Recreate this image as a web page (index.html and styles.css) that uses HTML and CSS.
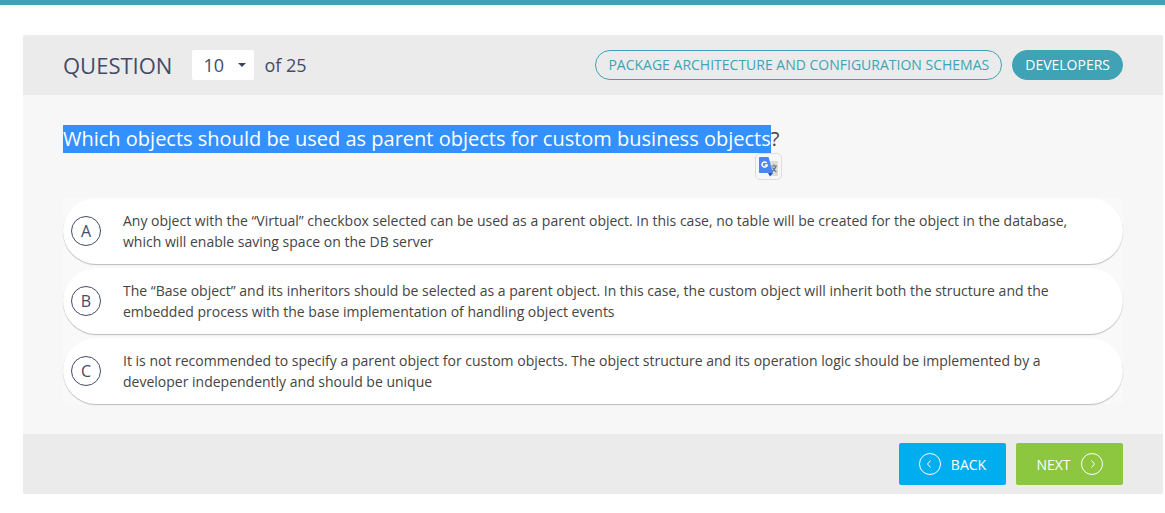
FILE: index.html
```html
<!DOCTYPE html>
<html lang="en">
<head>
<meta charset="utf-8">
<title>Question 10 of 25</title>
<link rel="stylesheet" href="styles.css">
</head>
<body>
<main class="quiz">
  <header class="quiz-header">
    <h1 class="quiz-title">QUESTION</h1>
    <div class="picker">
      <select class="picker-select" aria-label="Question number"><option>10</option></select>
      <svg class="picker-caret" viewBox="0 0 8 4" aria-hidden="true"><path d="M0 0h8L4 4z"/></svg>
    </div>
    <span class="total">of 25</span>
    <div class="tags">
      <a class="tag" href="#">PACKAGE ARCHITECTURE AND CONFIGURATION SCHEMAS</a>
      <a class="tag tag-filled" href="#">DEVELOPERS</a>
    </div>
  </header>
  <form class="quiz-body">
    <h2 class="question"><span class="selected">Which objects should be used as parent objects for custom business objects<button class="translate" type="button" aria-label="Translate">
      <svg viewBox="0 0 20 20" aria-hidden="true">
        <path fill="#dcdcdc" d="M9 4h9.500q.5 0 .5.500v14q0 .5-.5.500H12z"/>
        <path fill="none" stroke="#607d80" stroke-width="1.200" d="M12.500 9H18M15 7.500V9M17 9q-1 4-5 6M13.500 10.500q1.500 3 4 4.500"/>
        <path fill="#4a86ee" d="M.8 0H9.500L14 16H.8q-.8 0-.8-.8V.8Q0 0 .8 0z"/>
        <path fill="#2a4fc0" d="M9 16h5l-3 3.500z"/>
        <path fill="none" stroke="#fff" stroke-width="1.500" d="M7.700 5.900A2.600 2.600 0 1 0 8.200 8H5.800"/>
      </svg>
    </button></span>?</h2>
    <div class="answers">
      <div class="answer"><label class="card"><input class="choice" type="radio" name="answer"><span class="letter">A</span><span class="text">Any object with the “Virtual” checkbox selected can be used as a parent object. In this case, no table will be created for the object in the database, which will enable saving space on the DB server</span></label></div>
      <div class="answer"><label class="card"><input class="choice" type="radio" name="answer"><span class="letter">B</span><span class="text">The “Base object” and its inheritors should be selected as a parent object. In this case, the custom object will inherit both the structure and the embedded process with the base implementation of handling object events</span></label></div>
      <div class="answer"><label class="card"><input class="choice" type="radio" name="answer"><span class="letter">C</span><span class="text">It is not recommended to specify a parent object for custom objects. The object structure and its operation logic should be implemented by a developer independently and should be unique</span></label></div>
    </div>
  </form>
  <footer class="quiz-footer">
    <button class="nav back" type="button"><svg class="nav-icon" viewBox="0 0 22 22" aria-hidden="true"><circle cx="11" cy="11" r="10.500"/><path d="M11.500 7.500 8.500 11l3 3.500"/></svg>BACK</button>
    <button class="nav next" type="button">NEXT<svg class="nav-icon" viewBox="0 0 22 22" aria-hidden="true"><circle cx="11" cy="11" r="10.500"/><path d="m10.500 7.500 3 3.500-3 3.500"/></svg></button>
  </footer>
</main>
</body>
</html>
```
FILE: styles.css
```css
* { box-sizing: border-box; }
body {
  margin: 0;
  border-top: 5px solid #3fa3b5;
  background: #fff;
  color: #444;
  font-family: "Open Sans", "Noto Sans", sans-serif;
  font-size: 14px;
}
.quiz {
  margin: 30px 2px 0 23px;
  border-radius: 2px;
  background: #f7f7f7;
}
.quiz-header {
  display: flex;
  align-items: center;
  min-height: 60px;
  padding: 0 40px;
  border-radius: 2px 2px 0 0;
  background: #ebebeb;
  color: #444b69;
}
.quiz-title {
  margin: 0 20px 0 0;
  font-size: 22px;
  font-weight: 400;
}
.picker {
  display: grid;
  align-items: center;
  width: 62px;
}
.picker-select {
  grid-area: 1 / 1;
  appearance: none;
  height: 30px;
  padding: 0 11px;
  border: 0;
  border-radius: 2px;
  background: #fff;
  color: inherit;
  font: inherit;
  font-size: 18px;
}
.picker-caret {
  grid-area: 1 / 1;
  justify-self: end;
  width: 8px;
  height: 4px;
  margin-right: 8px;
  fill: #3c4262;
  pointer-events: none;
}
.total { margin-left: 10px; font-size: 18px; }
.tags { display: flex; gap: 10px; margin-left: auto; }
.tag {
  height: 30px;
  padding: 0 12px;
  border: 1px solid #3fa3b5;
  border-radius: 15px;
  color: #3fa3b5;
  line-height: 28px;
  text-decoration: none;
}
.tag-filled { background: #3fa3b5; color: #fff; }
.quiz-body { padding: 30px 40px; }
.question {
  margin: 0 0 45px;
  font-size: 20px;
  font-weight: 400;
  line-height: 28px;
}
.selected {
  display: inline-block;
  position: relative;
  background: #3390ff;
  color: #fff;
}
.translate {
  position: absolute;
  top: 100%;
  right: -11px;
  display: flex;
  width: 27px;
  height: 27px;
  padding: 3px;
  border: 1px solid #ddd;
  border-radius: 5px;
  background: #f7f7f7;
}
.translate svg { flex: none; width: 20px; height: 20px; }
.answer {
  padding-bottom: 4px;
  background: #f9f9f9;
}
.answer:last-child { padding-bottom: 0; }
.card {
  display: flex;
  align-items: center;
  min-height: 66px;
  padding: 12px 40px 12px 8px;
  border-radius: 33px;
  background: #fff;
  box-shadow: 0 1px 1px #bbb;
}
.choice {
  position: absolute;
  opacity: 0;
  pointer-events: none;
}
.letter {
  flex: none;
  width: 30px;
  height: 30px;
  margin-right: 22px;
  border: 1px solid #444b69;
  border-radius: 50%;
  color: #444b69;
  font-size: 16px;
  line-height: 28px;
  text-align: center;
}
.text { line-height: 21px; }
.quiz-footer {
  display: flex;
  justify-content: flex-end;
  align-items: center;
  gap: 10px;
  min-height: 60px;
  padding: 0 40px;
  border-radius: 0 0 2px 2px;
  background: #ebebeb;
}
.nav {
  display: flex;
  align-items: center;
  justify-content: center;
  gap: 10px;
  min-width: 107px;
  height: 42px;
  padding: 0 16px;
  border: 0;
  border-radius: 2px;
  color: #fff;
  font: inherit;
}
.back { background: #00aeef; }
.next { background: #8dc63f; }
.nav-icon {
  width: 22px;
  height: 22px;
  fill: none;
  stroke: #fff;
}
```
